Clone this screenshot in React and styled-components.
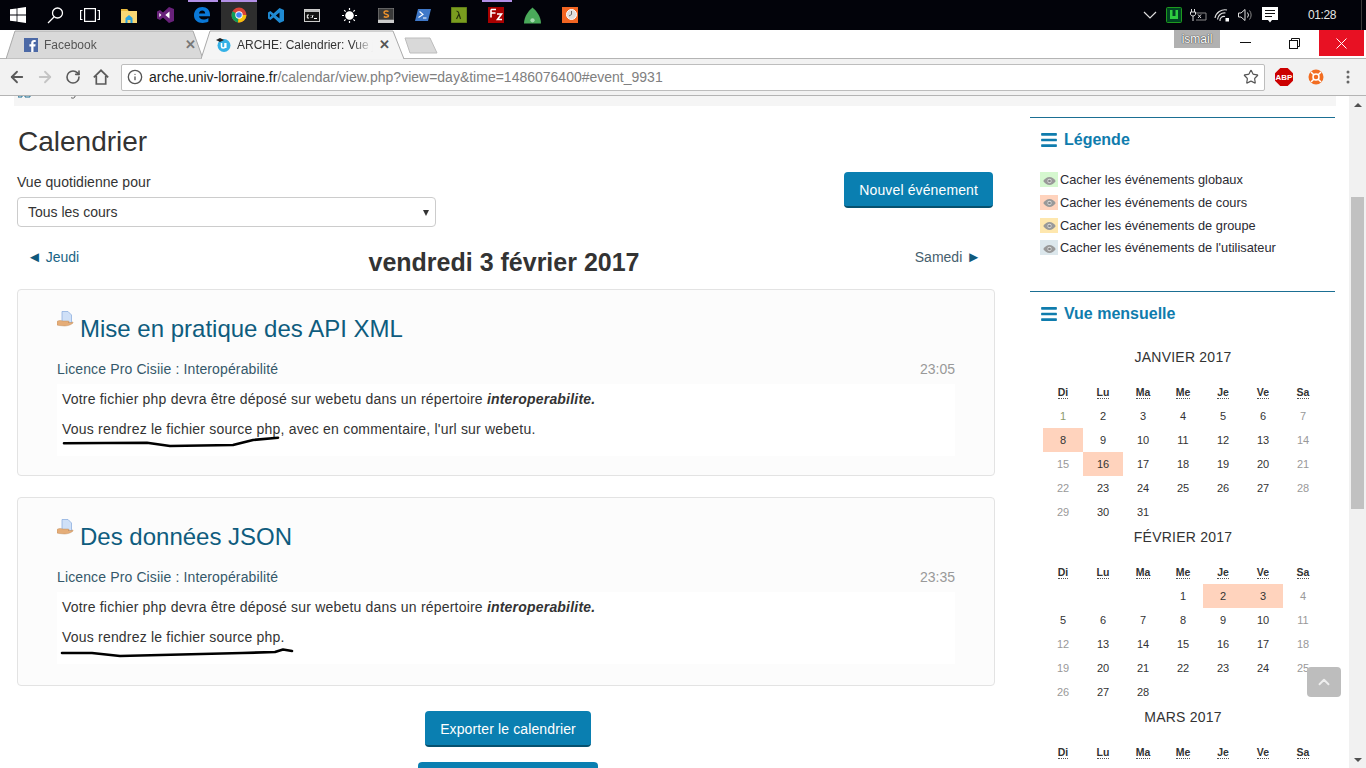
import React from 'react'
import styled, { createGlobalStyle } from 'styled-components'
import { ArrowLeft, ArrowRight, RotateCw, Info, Star, ChevronUp } from 'lucide-react'
import { FaBars } from 'react-icons/fa'

const Global = createGlobalStyle`
  html, body { margin: 0; padding: 0; background: #fff; }
  body { font-family: "Liberation Sans", Arial, sans-serif; font-size: 14px; color: #333; }
  * { box-sizing: border-box; }
`

const Shell = styled.div`
  width: 1366px;
  height: 768px;
  overflow: hidden;
  display: flex;
  flex-direction: column;
`

/* ---------- windows taskbar ---------- */
const Taskbar = styled.div`
  height: 30px;
  background: #02030a;
  display: flex;
  align-items: center;
  flex: none;
`
const Slot = styled.div`
  position: relative;
  width: 36.75px;
  height: 30px;
  padding-right: ${p => p.$nudge || 0}px;
  display: flex;
  align-items: center;
  justify-content: center;
  background: ${p => (p.$active ? '#2e2e2e' : 'transparent')};
  &::before {
    content: '';
    display: ${p => (p.$open ? 'block' : 'none')};
    position: absolute;
    top: 0;
    left: ${p => (p.$active ? '0' : '4px')};
    right: ${p => (p.$active ? '0' : '3px')};
    height: 2px;
    background: #b28fe6;
  }
`
const Tray = styled.div`
  margin-left: auto;
  display: flex;
  align-items: center;
  height: 30px;
`
const TraySlot = styled.div`
  width: 24px;
  height: 30px;
  display: flex;
  align-items: center;
  justify-content: center;
`
const Clock = styled.div`
  margin-left: 26px;
  width: 27px;
  font-size: 12px;
  letter-spacing: -0.4px;
  color: #e6e6e6;
  white-space: nowrap;
`
const TraySep = styled.div`
  margin-left: 26px;
  margin-right: 4px;
  width: 1px;
  height: 30px;
  background: #3a3a3a;
`

/* ---------- chrome tabs ---------- */
const TabStrip = styled.div`
  height: 29px;
  flex: none;
  display: flex;
  padding-left: 6px;
  background: #fff;
  position: relative;
  border-bottom: 1px solid #b4b4b4;
`
const Tab = styled.div`
  position: relative;
  width: ${p => p.$w}px;
  margin-left: ${p => p.$ml || 0}px;
  height: 29px;
  padding: 0 ${p => p.$pr}px 0 ${p => p.$pl}px;
  display: flex;
  align-items: center;
  gap: 6px;
  font-size: 12px;
  color: ${p => (p.$current ? '#333' : '#555')};
  z-index: ${p => (p.$current ? 2 : 1)};
`
const TabShape = styled.svg`
  position: absolute;
  inset: 0;
  width: 100%;
  height: 100%;
  z-index: -1;
`
const TabTitle = styled.span`
  flex: 1;
  overflow: hidden;
  white-space: nowrap;
  -webkit-mask-image: linear-gradient(90deg, #000 85%, transparent);
  mask-image: linear-gradient(90deg, #000 85%, transparent);
`
const TabClose = styled.span`
  font-size: 13px;
  font-weight: bold;
  color: ${p => (p.$current ? '#555' : '#777')};
  line-height: 1;
`
const NewTab = styled.svg`
  width: 34px;
  height: 17px;
  margin: 7px 0 0 -1px;
`
const WinArea = styled.div`
  margin-left: auto;
  display: flex;
  align-items: flex-start;
  height: 28px;
`
const UserBadge = styled.div`
  width: 46px;
  height: 18px;
  background: #b1b1b1;
  color: #fff;
  font-size: 12px;
  text-align: center;
  line-height: 18px;
  text-shadow: 0 0 1px #333, 0 0 1px #333;
`
const WinBtn = styled.div`
  width: ${p => p.$w}px;
  height: 26px;
  display: flex;
  align-items: center;
  justify-content: center;
  background: ${p => (p.$close ? '#e81123' : 'transparent')};
`
const WinEnd = styled.div`
  width: 2px;
`

/* ---------- chrome toolbar ---------- */
const Toolbar = styled.div`
  height: 37px;
  flex: none;
  background: #f2f2f2;
  border-bottom: 1px solid #b4b4b4;
  display: flex;
  align-items: center;
  padding: 0 2px 0 3px;
`
const ToolBtn = styled.div`
  width: ${p => p.$w || 28}px;
  height: 28px;
  display: flex;
  align-items: center;
  justify-content: center;
  color: ${p => (p.$off ? '#c4c4c4' : '#5a5a5a')};
`
const Omnibox = styled.div`
  flex: 1;
  height: 27px;
  margin: 0 3px 0 6px;
  background: #fff;
  border: 1px solid #bdbdbd;
  border-radius: 2px;
  display: flex;
  align-items: center;
  padding: 0 5px;
  font-size: 14px;
`
const UrlHost = styled.span`
  color: #222;
  margin-left: 6px;
`
const UrlRest = styled.span`
  color: #808080;
`
const OmniStar = styled.div`
  margin-left: auto;
  display: flex;
  color: #555;
`

/* ---------- page ---------- */
const Viewport = styled.div`
  position: relative;
  flex: 1;
  min-height: 0;
  display: flex;
  overflow: hidden;
`
const Page = styled.div`
  width: 1349px;
  flex: none;
`
const CrumbStrip = styled.div`
  height: 10px;
  margin-left: 14px;
  width: 1322px;
  background: #f5f5f5;
  overflow: hidden;
  display: flex;
  align-items: flex-start;
  padding-left: 4px;
`
const Columns = styled.div`
  display: flex;
  padding-left: 17px;
`
const Main = styled.main`
  width: 978px;
  flex: none;
`
const Side = styled.aside`
  width: 305px;
  margin-left: 35px;
  padding-top: 11px;
  flex: none;
`
const PageTitle = styled.h2`
  margin: 21px 0 0;
  padding-left: 1px;
  font-size: 28px;
  font-weight: normal;
  line-height: 30px;
  color: #333;
`
const FilterRow = styled.div`
  margin-top: 15px;
  display: flex;
  justify-content: space-between;
  align-items: flex-start;
  padding-right: 2px;
`
const FilterLeft = styled.div`
  width: 419px;
`
const FilterLabel = styled.div`
  line-height: 20px;
  color: #333;
  letter-spacing: 0.05px;
`
const SelectBox = styled.div`
  position: relative;
  margin-top: 5px;
  height: 30px;
  background: #fff;
  border: 1px solid #ccc;
  border-radius: 4px;
  padding: 0 10px;
  line-height: 28px;
  &::after {
    content: '';
    position: absolute;
    right: 6px;
    top: 12px;
    border: 3.5px solid transparent;
    border-top: 6px solid #333;
    border-bottom: 0;
  }
`
const Btn = styled.a`
  display: inline-block;
  height: 36px;
  padding: 0 15px;
  background: #0a7fb1;
  border-bottom: 2px solid #06516f;
  border-radius: 4px;
  color: #fff;
  line-height: 36px;
  letter-spacing: 0.12px;
  white-space: nowrap;
  min-width: ${p => p.$min || 0}px;
  text-align: center;
  margin-left: ${p => p.$ml || 0}px;
`
const DayNav = styled.div`
  margin-top: 20px;
  height: 30px;
  display: grid;
  grid-template-columns: 1fr auto 1fr;
  padding: 0 14px 0 10px;
`
const NavLink = styled.a`
  line-height: 20px;
  color: ${p => (p.$next ? '#46606e' : '#1a6485')};
  justify-self: ${p => (p.$next ? 'end' : 'start')};
`
const NavArrow = styled.span`
  color: #0f5a7c;
  font-size: 15px;
`
const DayTitle = styled.h3`
  margin: 0;
  font-size: 25px;
  line-height: 30px;
  font-weight: bold;
  color: #333;
`
const Card = styled.section`
  margin-top: ${p => p.$mt}px;
  height: ${p => p.$h}px;
  background: #fcfcfc;
  border: 1px solid #e3e3e3;
  border-radius: 4px;
  padding: 24px 39px 0;
`
const CardTitleRow = styled.div`
  position: relative;
  padding-left: 23px;
`
const CardIcon = styled.svg`
  position: absolute;
  left: 0;
  top: -3px;
  width: 17px;
  height: 17px;
`
const CardTitle = styled.h3`
  margin: 0;
  font-size: 24px;
  line-height: 30px;
  font-weight: normal;
  color: #0f5c7e;
`
const CardMeta = styled.div`
  margin-top: 15px;
  display: flex;
  justify-content: space-between;
  line-height: 20px;
  color: #35586a;
  letter-spacing: 0.13px;
`
const CardTime = styled.span`
  color: #999;
  letter-spacing: 0;
`
const CardBody = styled.div`
  margin-top: 5px;
  height: 72px;
  background: #fff;
  padding: 5px 5px 0;
`
const BodyLine = styled.p`
  position: relative;
  margin: 0 0 10px;
  line-height: 20px;
  color: #333;
  letter-spacing: 0.2px;
`
const Scribble = styled.svg`
  position: absolute;
  left: 0;
  top: 0;
  width: 240px;
  height: 32px;
  overflow: visible;
`
const Actions = styled.div`
  margin-top: 25px;
  display: flex;
  flex-direction: column;
  align-items: center;
  gap: 15px;
`

/* ---------- sidebar ---------- */
const Block = styled.section`
  border-top: 1px solid #1b6f93;
  height: ${p => p.$h || 'auto'};
`
const BlockHead = styled.h4`
  margin: 11px 0 0 10px;
  font-size: 16px;
  line-height: 22px;
  color: #0f7cad;
  font-weight: bold;
  display: flex;
  align-items: center;
  gap: 6px;
`
const LegendList = styled.div`
  margin: 17.4px 0 0 10px;
`
const LegendRow = styled.div`
  height: 22.67px;
  display: flex;
  align-items: center;
  gap: 2px;
  font-size: 12.8px;
  color: #2b2b33;
`
const Swatch = styled.span`
  width: 18px;
  height: 15px;
  background: ${p => p.$c};
  display: flex;
  align-items: center;
  justify-content: center;
  padding-top: 2px;
`
const Months = styled.div`
  margin: 20px 0 0 13px;
  width: 280px;
`
const Month = styled.div`
  margin-bottom: 1px;
`
const MonthName = styled.div`
  height: 24px;
  line-height: 24px;
  margin-bottom: 11px;
  text-align: center;
  font-size: 14px;
  letter-spacing: 0.22px;
  color: #333;
`
const DayGrid = styled.div`
  display: grid;
  grid-template-columns: repeat(7, 40px);
  grid-auto-rows: 24px;
`
const DayHead = styled.div`
  display: flex;
  align-items: center;
  justify-content: center;
`
const DayAbbr = styled.abbr`
  font-size: 10.5px;
  font-weight: bold;
  line-height: 12px;
  color: #333;
  border-bottom: 1px dotted #555;
`
const Day = styled.div`
  display: flex;
  align-items: center;
  justify-content: center;
  font-size: 11px;
  color: ${p => p.$color};
  background: ${p => (p.$hit ? '#ffd3bd' : 'transparent')};
`

/* ---------- scrollbar and back to top ---------- */
const Scrollbar = styled.div`
  width: 17px;
  flex: none;
  background: #f1f1f1;
  display: flex;
  flex-direction: column;
  align-items: center;
`
const ScrollArrow = styled.div`
  height: 17px;
  flex: none;
  margin-top: ${p => (p.$end ? 'auto' : '0')};
  display: flex;
  align-items: center;
  &::after {
    content: '';
    border-left: 4px solid transparent;
    border-right: 4px solid transparent;
    ${p => (p.$end ? 'border-top: 4px solid #505050;' : 'border-bottom: 4px solid #505050;')}
  }
`
const ScrollThumb = styled.div`
  margin-top: 84px;
  width: 13px;
  height: 312px;
  background: #c1c1c1;
`
const BackTop = styled.div`
  position: absolute;
  right: 25px;
  top: 571px;
  width: 34px;
  height: 30px;
  background: #bdbdbd;
  border-radius: 4px;
  display: flex;
  align-items: center;
  justify-content: center;
  color: #eee;
`

/* ---------- small drawings ---------- */
const Chrome = () => (
  <svg width="16" height="16" viewBox="0 0 16 16">
    <circle cx="8" cy="8" r="7.5" fill="#db4437" />
    <path d="M8 8L1.5 4.2A7.5 7.5 0 0 0 7 15.4z" fill="#0f9d58" />
    <path d="M8 8H15.4A7.5 7.5 0 0 1 7 15.4z" fill="#f4c20d" />
    <circle cx="8" cy="8" r="3.7" fill="#fff" />
    <circle cx="8" cy="8" r="2.8" fill="#4285f4" />
  </svg>
)

const taskIcons = [
  <svg width="16" height="16" viewBox="0 0 16 16" fill="#fff"><path d="M0 2.3l6.6-.9v6.2H0zM7.4 1.3L16 0v7.6H7.4zM0 8.4h6.6v6.2L0 13.7zM7.4 8.4H16V16l-8.6-1.2z" /></svg>,
  <svg width="17" height="17" viewBox="0 0 17 17" fill="none" stroke="#fff" strokeWidth="1.3"><circle cx="10.5" cy="6" r="5" /><path d="M7 10L1 16" /></svg>,
  <svg width="20" height="14" viewBox="0 0 20 14" fill="none" stroke="#fff" strokeWidth="1.2"><rect x="4.6" y=".6" width="10.8" height="12.8" /><path d="M2.5 2.5H.6v9h1.9M17.5 2.5h1.9v9h-1.9" /></svg>,
  <svg width="16" height="15" viewBox="0 0 16 15"><path d="M0 1h6l1.5 2H16v12H0z" fill="#f7d774" /><path d="M0 1h6l1.5 2H0z" fill="#e8b93e" /><path d="M4.500 10L8 7l3.500 3v5h-2v-3h-3v3h-2z" fill="#2aa4e0" /></svg>,
  <svg width="17" height="16" viewBox="0 0 17 16"><path d="M12 0l5 2v12l-5 2-6-5.500L3 13l-3-1.500v-7L3 3l3 2.500z" fill="#68217a" /><path d="M12.500 4.500v7L8.300 8zM2.300 6L4.400 8 2.300 10z" fill="#fff" /></svg>,
  <svg width="16" height="16" viewBox="0 0 16 16"><path d="M8.400 0C12.800 0 16 3 16 7.600v1.700H5c.2 2 2 3.200 4.200 3.200 2 0 3.600-.5 5.200-1.500v3.600c-1.600 1-3.600 1.400-5.800 1.400C3.300 16 0 13 0 8.300 0 3.500 3.500 0 8.400 0zm2.800 6.500C11.100 4.700 10 3.500 8.200 3.500 6.500 3.500 5.300 4.700 5 6.500z" fill="#0a78d7" /></svg>,
  <Chrome />,
  <svg width="16" height="15" viewBox="0 0 16 15"><path d="M11.500 0L16 2v11l-4.500 2-6-5.500L2.400 12 0 10.500v-6L2.400 3l3.100 2.500z" fill="#1f8ad2" /><path d="M11.500 4.500v6L7.800 7.500zM1.900 5.800L3.800 7.500 1.900 9.200z" fill="#02030a" /></svg>,
  <svg width="16" height="13" viewBox="0 0 16 13"><rect x=".5" y=".5" width="15" height="12" fill="#111" stroke="#ccc" /><rect x="1" y="1" width="14" height="2" fill="#bbb" /><path d="M5 6H3.300v3H5M7 6.500v.5M7 8.500v.5M9 6l-1 3M10 9.500h3" stroke="#fff" fill="none" /></svg>,
  <svg width="15" height="15" viewBox="0 0 15 15" stroke="#fff" strokeWidth="1.2"><circle cx="7.500" cy="7.500" r="3.700" fill="#fff" /><path d="M7.500 0v2M7.500 13v2M0 7.500h2M13 7.500h2M2.200 2.200l1.400 1.400M11.400 11.400l1.400 1.400M2.200 12.800l1.400-1.400M11.400 3.600l1.400-1.400" /></svg>,
  <svg width="16" height="15" viewBox="0 0 16 15"><rect width="16" height="12" fill="#3a3a3a" stroke="#888" /><rect y="12" width="16" height="3" fill="#ccc" /><path d="M10.500 3.500C9 2.500 6 3 6 4.700c0 2 4.500 1 4.500 3 0 1.600-3 1.900-4.700.8" fill="none" stroke="#f0932b" strokeWidth="1.5" /></svg>,
  <svg width="16" height="12" viewBox="0 0 16 12"><path d="M3 0h13l-3 12H0z" fill="#3f78c8" /><path d="M4.500 2.500L8 5.500l-4.500 3M8 9h3.500" stroke="#fff" fill="none" strokeWidth="1.1" /></svg>,
  <svg width="16" height="16" viewBox="0 0 16 16"><rect width="16" height="16" fill="#7a9d1f" stroke="#4b6312" /><path d="M5.500 4c2 0 2 1 2.500 3l1.500 5M8 7l-2.500 5" stroke="#26330a" fill="none" strokeWidth="1.2" /></svg>,
  <svg width="16" height="16" viewBox="0 0 16 16"><rect width="16" height="16" fill="#a80000" /><path d="M3 2.500h5M3 2.500v8M3 6h4.500M9 7h4.500L9.500 12.500h4.500" stroke="#fff" fill="none" strokeWidth="1.6" /></svg>,
  <svg width="17" height="17" viewBox="0 0 16 15"><path d="M8 0c3 2.500 8 8 8 15H0C0 8 5 2.500 8 0z" fill="#4aa95a" /><circle cx="8" cy="12" r="2" fill="#a5d9af" /></svg>,
  <svg width="16" height="16" viewBox="0 0 16 16"><rect width="16" height="16" fill="#f26522" /><circle cx="9.500" cy="7.500" r="5" fill="#ddd" stroke="#fff" /><path d="M9.500 4v3.500L7 9" stroke="#666" fill="none" /></svg>
]

const EventIcon = () => (
  <CardIcon viewBox="0 0 17 17">
    <path d="M5 .5h6l3.500 3.500v8H5z" fill="#cfe0f7" stroke="#8fb0e0" strokeWidth=".8" />
    <path d="M0 10.500c2-1.500 4-1 6-.5h5c1.500 0 1.500 1.500 0 1.500h3.500l1-.5c.8 0 .8 1 0 1.500-2 1.500-5 2.500-8 2.500L2 14.500 0 14z" fill="#e5ad78" stroke="#b98350" strokeWidth=".4" />
  </CardIcon>
)

const Eye = () => (
  <svg width="13" height="8" viewBox="0 0 14 9">
    <path d="M0 4.500C2 1.500 4.500 0 7 0s5 1.500 7 4.500C12 7.500 9.500 9 7 9S2 7.500 0 4.500z" fill="#999" />
    <circle cx="7" cy="4.500" r="2.400" fill="#ddd" />
    <circle cx="7" cy="4.500" r="1.500" fill="#888" />
  </svg>
)

const legend = [
  ['#d5f7cf', 'Cacher les événements globaux'],
  ['#ffd3bd', 'Cacher les événements de cours'],
  ['#fee7ae', 'Cacher les événements de groupe'],
  ['#dce7ec', "Cacher les événements de l'utilisateur"]
]

const abbrs = ['Di', 'Lu', 'Ma', 'Me', 'Je', 'Ve', 'Sa']

// dark: weekend days that the site still prints in the normal colour
const months = [
  { name: 'JANVIER 2017', start: 0, days: 31, hits: [8, 16], dark: [8], tinted: [1] },
  { name: 'FÉVRIER 2017', start: 3, days: 28, hits: [2, 3], dark: [5], tinted: [] },
  { name: 'MARS 2017', start: 3, days: 0, hits: [], dark: [], tinted: [] }
]

const dayColor = (day, col, dark, tinted) => {
  if (tinted.includes(day)) return '#8c9a6c'
  if ((col === 0 || col === 6) && !dark.includes(day)) return '#999'
  return '#333'
}

const MonthBlock = ({ name, start, days, hits, dark, tinted }) => (
  <Month>
    <MonthName>{name}</MonthName>
    <DayGrid>
      {abbrs.map(a => (
        <DayHead key={a}><DayAbbr>{a}</DayAbbr></DayHead>
      ))}
      {Array.from({ length: start }).map((_, i) => <div key={i} />)}
      {Array.from({ length: days }).map((_, i) => (
        <Day key={i} $color={dayColor(i + 1, (start + i) % 7, dark, tinted)} $hit={hits.includes(i + 1)}>
          {i + 1}
        </Day>
      ))}
    </DayGrid>
  </Month>
)

const App = () => {
  return (
    <Shell>
      <Global />
      <Taskbar>
        {taskIcons.map((icon, i) => (
          <Slot key={i} $open={i === 5 || i === 6 || i === 13} $active={i === 6} $nudge={i === 2 ? 4 : 0}>{icon}</Slot>
        ))}
        <Tray>
          <TraySlot>
            <svg width="14" height="8" viewBox="0 0 14 8" fill="none" stroke="#ddd" strokeWidth="1.2"><path d="M1 1l6 6 6-6" /></svg>
          </TraySlot>
          <TraySlot>
            <svg width="16" height="16" viewBox="0 0 16 16"><rect x=".5" y=".5" width="15" height="15" rx="1" fill="#042" stroke="#1e9a1e" /><path d="M4 3v9h8V3h-2.500v6h-3V3z" fill="#2ecc40" /></svg>
          </TraySlot>
          <TraySlot>
            <svg width="17" height="14" viewBox="0 0 17 14" fill="none" stroke="#ddd"><path d="M1.500 1v3M4.500 1v3M.5 4h5v2c0 1-1 2-2.500 2S.5 7 .5 6zM3 8v5" /><path d="M6 5h10v7H6" stroke="#888" /><path d="M8 6.500l3 3.500M11 6.500l-3 3.500" /></svg>
          </TraySlot>
          <TraySlot>
            <svg width="16" height="14" viewBox="0 0 16 14" fill="none" stroke="#ddd" strokeWidth="1.2"><path d="M1 10a10 10 0 0 1 12-8M3.500 11.500a7 7 0 0 1 8-6.500M6 13a4 4 0 0 1 5-4.500" /><rect x="11.500" y="10" width="3.500" height="3.500" fill="#fff" stroke="none" /></svg>
          </TraySlot>
          <TraySlot>
            <svg width="16" height="14" viewBox="0 0 16 14" fill="none" stroke="#ddd"><path d="M.5 5v4H3l4 3.500v-11L3 5z" /><path d="M9.500 4.500a4 4 0 0 1 0 5" /><path d="M11.500 2.500a7 7 0 0 1 0 9" stroke="#888" /></svg>
          </TraySlot>
          <TraySlot>
            <svg width="16" height="16" viewBox="0 0 16 16"><path d="M0 0h16v13h-6l-2 2.500L6 13H0z" fill="#fff" /><path d="M3 3.500h10M3 6.500h10M3 9.500h7" stroke="#111" /></svg>
          </TraySlot>
          <Clock>01:28</Clock>
          <TraySep />
        </Tray>
      </Taskbar>

      <TabStrip>
        <Tab $w={197} $pl={18} $pr={7}>
          <TabShape viewBox="0 0 197 29" preserveAspectRatio="none">
            <path d="M0 29L9 1H187L197 29z" fill="#d9d9d9" stroke="#a9a9a9" />
          </TabShape>
          <svg width="14" height="14" viewBox="0 0 14 14"><rect width="14" height="14" fill="#4c69a6" /><path d="M9.500 14V8.500h1.800l.3-2.200H9.500V5c0-.6.2-1 1-1h1.200V2c-.5-.1-1-.1-1.700-.1C8.400 1.900 7.200 3 7.200 4.800v1.500H5.400v2.200h1.800V14z" fill="#fff" /></svg>
          <TabTitle>Facebook</TabTitle>
          <TabClose>✕</TabClose>
        </Tab>
        <Tab $w={204} $ml={-2} $pl={15} $pr={15} $current>
          <TabShape viewBox="0 0 204 29" preserveAspectRatio="none">
            <path d="M0 29L9 1H192L203 29" fill="#f5f5f5" stroke="#a9a9a9" />
          </TabShape>
          <svg width="15" height="15" viewBox="0 0 15 15"><circle cx="8" cy="8.500" r="6.500" fill="#34b1e6" /><path d="M5.500 6v3.500c0 2 3.500 2 3.500 0V6M9.800 6v5" stroke="#fff" strokeWidth="1.5" fill="none" /><path d="M0 3l4-2 4 2-4 2z" fill="#222" /></svg>
          <TabTitle>ARCHE: Calendrier: Vue jour</TabTitle>
          <TabClose $current>✕</TabClose>
        </Tab>
        <NewTab viewBox="0 0 34 17">
          <path d="M1 1H26L33 16H6z" fill="#d9d9d9" stroke="#bdbdbd" />
        </NewTab>
        <WinArea>
          <UserBadge>ismail</UserBadge>
          <WinBtn $w={50}><svg width="11" height="2"><rect width="11" height="1" fill="#111" /></svg></WinBtn>
          <WinBtn $w={49}><svg width="11" height="11" viewBox="0 0 11 11" fill="none" stroke="#111"><rect x=".5" y="2.500" width="8" height="8" /><path d="M2.500 2.500V.5h8v8h-2" /></svg></WinBtn>
          <WinBtn $w={45} $close><svg width="11" height="11" viewBox="0 0 11 11" stroke="#fff"><path d="M.5.500l10 10M10.500.500l-10 10" /></svg></WinBtn>
          <WinEnd />
        </WinArea>
      </TabStrip>

      <Toolbar>
        <ToolBtn><ArrowLeft size={18} strokeWidth={2.4} /></ToolBtn>
        <ToolBtn $off><ArrowRight size={18} strokeWidth={2.4} /></ToolBtn>
        <ToolBtn><RotateCw size={16} strokeWidth={2.4} /></ToolBtn>
        <ToolBtn>
          <svg width="16" height="16" viewBox="0 0 16 16" fill="none" stroke="#5a5a5a" strokeWidth="1.7"><path d="M.8 8.300L8 1.300l7.200 7M3.300 7v8h9.400V7" /></svg>
        </ToolBtn>
        <Omnibox>
          <Info size={16} color="#555" strokeWidth={2} />
          <UrlHost>arche.univ-lorraine.fr</UrlHost>
          <UrlRest>/calendar/view.php?view=day&amp;time=1486076400#event_9931</UrlRest>
          <OmniStar><Star size={16} strokeWidth={1.8} /></OmniStar>
        </Omnibox>
        <ToolBtn $w={32}>
          <svg width="18" height="18" viewBox="0 0 17 17"><path d="M5 0h7l5 5v7l-5 5H5l-5-5V5z" fill="#c00" /><text x="8.500" y="11.200" fontSize="7.5" fontWeight="bold" textAnchor="middle" fill="#fff" fontFamily="Liberation Sans">ABP</text></svg>
        </ToolBtn>
        <ToolBtn $w={32}>
          <svg width="16" height="16" viewBox="0 0 16 16"><circle cx="8" cy="8" r="7.500" fill="#f26d21" /><circle cx="8" cy="8" r="3" fill="none" stroke="#fff" strokeWidth="1.5" /><path d="M3 3l3 3M13 3l-3 3M3 13l3-3M13 13l-3-3" stroke="#fff" strokeWidth="1.5" /></svg>
        </ToolBtn>
        <ToolBtn $w={32}>
          <svg width="4" height="14" viewBox="0 0 4 14" fill="#666"><circle cx="2" cy="2" r="1.500" /><circle cx="2" cy="7" r="1.500" /><circle cx="2" cy="12" r="1.500" /></svg>
        </ToolBtn>
      </Toolbar>

      <Viewport>
        <Page>
          <CrumbStrip>
            <svg width="70" height="10" viewBox="0 0 70 10" fill="none"><path d="M0 0v1h4V0M7 0v1h5V0" stroke="#1a6c91" /><path d="M57 0c0 2.500-3 2.500-4 1.500" stroke="#555" /></svg>
          </CrumbStrip>
          <Columns>
            <Main>
              <PageTitle>Calendrier</PageTitle>
              <FilterRow>
                <FilterLeft>
                  <FilterLabel>Vue quotidienne pour</FilterLabel>
                  <SelectBox>Tous les cours</SelectBox>
                </FilterLeft>
                <Btn>Nouvel événement</Btn>
              </FilterRow>
              <DayNav>
                <NavLink><NavArrow>◄</NavArrow> Jeudi</NavLink>
                <DayTitle>vendredi 3 février 2017</DayTitle>
                <NavLink $next>Samedi <NavArrow>►</NavArrow></NavLink>
              </DayNav>
              <Card $mt={12} $h={187}>
                <CardTitleRow>
                  <EventIcon />
                  <CardTitle>Mise en pratique des API XML</CardTitle>
                </CardTitleRow>
                <CardMeta>
                  <span>Licence Pro Cisiie : Interopérabilité</span>
                  <CardTime>23:05</CardTime>
                </CardMeta>
                <CardBody>
                  <BodyLine>Votre fichier php devra être déposé sur webetu dans un répertoire <b><i>interoperabilite.</i></b></BodyLine>
                  <BodyLine>
                    Vous rendrez le fichier source php, avec en commentaire, l'url sur webetu.
                    <Scribble viewBox="0 0 240 32">
                      <path d="M2 24.300L85 23.700 108 27 171 26 191 21 216 18.700" fill="none" stroke="#000" strokeWidth="2.6" strokeLinecap="round" strokeLinejoin="round" />
                    </Scribble>
                  </BodyLine>
                </CardBody>
              </Card>
              <Card $mt={21} $h={189}>
                <CardTitleRow>
                  <EventIcon />
                  <CardTitle>Des données JSON</CardTitle>
                </CardTitleRow>
                <CardMeta>
                  <span>Licence Pro Cisiie : Interopérabilité</span>
                  <CardTime>23:35</CardTime>
                </CardMeta>
                <CardBody>
                  <BodyLine>Votre fichier php devra être déposé sur webetu dans un répertoire <b><i>interoperabilite.</i></b></BodyLine>
                  <BodyLine>
                    Vous rendrez le fichier source php.
                    <Scribble viewBox="0 0 240 32">
                      <path d="M0 26L30 26 58 29 180 26 213 25 221 22.500 230 24" fill="none" stroke="#000" strokeWidth="2.6" strokeLinecap="round" strokeLinejoin="round" />
                    </Scribble>
                  </BodyLine>
                </CardBody>
              </Card>
              <Actions>
                <Btn $ml={4}>Exporter le calendrier</Btn>
                <Btn $ml={4} $min={180}>Gérer les abonnements</Btn>
              </Actions>
            </Main>
            <Side>
              <Block $h="174px">
                <BlockHead><FaBars size={18} />Légende</BlockHead>
                <LegendList>
                  {legend.map(([c, label]) => (
                    <LegendRow key={label}><Swatch $c={c}><Eye /></Swatch>{label}</LegendRow>
                  ))}
                </LegendList>
              </Block>
              <Block>
                <BlockHead><FaBars size={18} />Vue mensuelle</BlockHead>
                <Months>
                  {months.map(m => <MonthBlock key={m.name} {...m} />)}
                </Months>
              </Block>
            </Side>
          </Columns>
        </Page>
        <Scrollbar>
          <ScrollArrow />
          <ScrollThumb />
          <ScrollArrow $end />
        </Scrollbar>
        <BackTop><ChevronUp size={18} strokeWidth={2.5} /></BackTop>
      </Viewport>
    </Shell>
  )
}

export default App
